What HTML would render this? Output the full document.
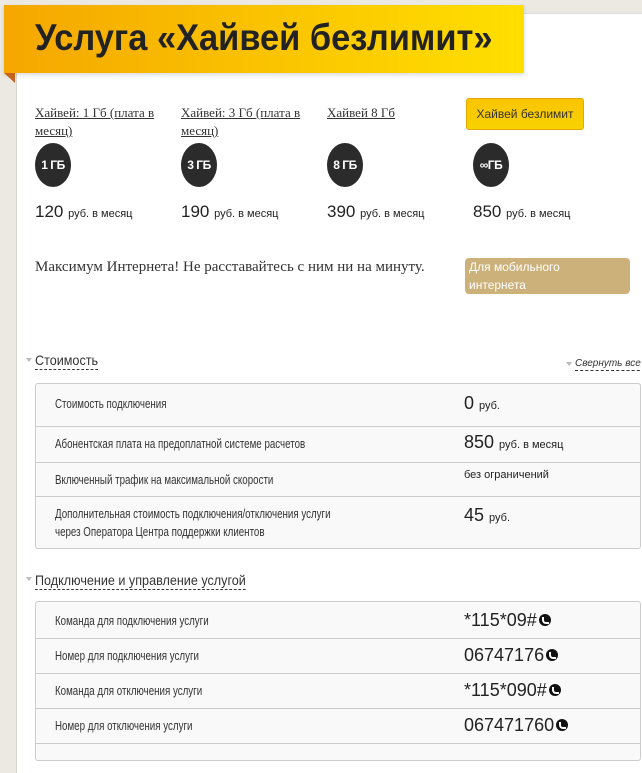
<!DOCTYPE html>
<html><head><meta charset="utf-8"><style>
*{margin:0;padding:0;box-sizing:border-box}
body{width:642px;height:747px;overflow:hidden;background:#ece9e3;font-family:"Liberation Sans",sans-serif;color:#222;position:relative}
.panel{position:absolute;left:16px;top:13px;width:640px;height:760px;background:#fff;border-left:1px solid #d9d6cf;border-top:1px solid #ddd}
.banner{position:absolute;left:4px;top:5px;width:520px;height:68px;background:linear-gradient(90deg,#f5a700,#ffdf00);box-shadow:0 2px 4px rgba(0,0,0,.15)}
.banner h1{position:absolute;left:31px;top:12px;white-space:nowrap;font-family:"Liberation Sans",sans-serif;font-size:37px;font-weight:bold;color:#222;transform:scaleX(.93);transform-origin:left}
.fold{position:absolute;left:4px;top:73px;width:0;height:0;border-top:10px solid #c4641a;border-left:11px solid transparent}
.a{position:absolute;font-family:"Liberation Serif",serif;font-size:13px;color:#333;text-decoration:underline;line-height:18px}
.c{position:absolute;width:36px;height:44px;border-radius:50%;background:#2b2b2b;color:#fff;font-size:12px;font-weight:bold;text-align:center;line-height:44px;top:143px;letter-spacing:-.5px}
.p{position:absolute;top:202px;font-size:17px;color:#222}
.p small{font-size:11px}
.btn{position:absolute;left:466px;top:98px;width:118px;height:32px;background:linear-gradient(#fbc400,#f7d200);border:1px solid #e4a800;border-radius:3px;font-size:12px;text-align:center;line-height:30px;color:#333}
.tag{position:absolute;left:465px;top:258px;width:165px;height:36px;background:#ccb27a;border-radius:4px;color:#fff;font-size:12px;line-height:18px;padding-left:4px}
.h{position:absolute;font-size:14px;color:#333;border-bottom:1px dashed #333;line-height:18px;transform:scaleX(.9);transform-origin:left;white-space:nowrap}
.tri{position:absolute;width:0;height:0;border-left:3px solid transparent;border-right:3px solid transparent;border-top:4px solid #bbb}
.tbl{position:absolute;left:35px;width:606px;background:#f9f9f9;border:1px solid #ccc;border-radius:3px}
.r{position:relative;border-bottom:1px solid #ccc;font-size:13px;color:#333}
.r:last-child{border-bottom:none}
.r .l{position:absolute;left:19px;line-height:18px;transform:scaleX(.75);transform-origin:left;white-space:nowrap}
.r .v{position:absolute;left:428px;font-size:18px;color:#222;white-space:nowrap}
.r .v small{font-size:11px}
.ph{display:inline-block;width:12px;height:12px;border-radius:50%;background:#111;vertical-align:0px;margin-left:2px;position:relative}
.ph:after{content:"";position:absolute;left:3px;top:3px;width:5px;height:5px;border-left:2px solid #fff;border-bottom:2px solid #fff;border-radius:0 0 0 4px}
</style></head><body>
<div class="panel"></div>
<div class="banner"><h1>Услуга «Хайвей безлимит»</h1></div>
<div class="fold"></div>
<div class="a" style="left:35px;top:104px;width:135px">Хайвей: 1 Гб (плата в месяц)</div>
<div class="a" style="left:181px;top:104px;width:135px">Хайвей: 3 Гб (плата в месяц)</div>
<div class="a" style="left:327px;top:104px">Хайвей 8 Гб</div>
<div class="btn">Хайвей безлимит</div>
<div class="c" style="left:35px">1 ГБ</div>
<div class="c" style="left:181px">3 ГБ</div>
<div class="c" style="left:327px">8 ГБ</div>
<div class="c" style="left:473px">∞ГБ</div>
<div class="p" style="left:35px">120 <small>руб. в месяц</small></div>
<div class="p" style="left:181px">190 <small>руб. в месяц</small></div>
<div class="p" style="left:327px">390 <small>руб. в месяц</small></div>
<div class="p" style="left:473px">850 <small>руб. в месяц</small></div>
<div style="position:absolute;left:35px;top:259px;font-family:'Liberation Serif',serif;font-size:15px;color:#333">Максимум Интернета! Не расставайтесь с ним ни на минуту.</div>
<div class="tag">Для мобильного<br>интернета</div>
<div class="tri" style="left:26px;top:358px"></div>
<div class="h" style="left:35px;top:351px">Стоимость</div>
<div class="tri" style="left:566px;top:362px"></div>
<div style="position:absolute;left:575px;top:358px;font-size:10px;font-style:italic;color:#333;border-bottom:1px dashed #333;width:70px;line-height:12px">Свернуть все</div>
<div class="tbl" style="top:383px;height:166px">
<div class="r" style="height:43px"><span class="l" style="top:11px">Стоимость подключения</span><span class="v" style="top:9px">0 <small>руб.</small></span></div>
<div class="r" style="height:36px"><span class="l" style="top:8px">Абонентская плата на предоплатной системе расчетов</span><span class="v" style="top:5px">850 <small>руб. в месяц</small></span></div>
<div class="r" style="height:34px"><span class="l" style="top:8px">Включенный трафик на максимальной скорости</span><span class="v" style="top:6px;font-size:11px">без ограничений</span></div>
<div class="r" style="height:51px"><span class="l" style="top:8px">Дополнительная стоимость подключения/отключения услуги<br>через Оператора Центра поддержки клиентов</span><span class="v" style="top:8px">45 <small>руб.</small></span></div>
</div>
<div class="tri" style="left:26px;top:577px"></div>
<div class="h" style="left:35px;top:571px">Подключение и управление услугой</div>
<div class="tbl" style="top:601px;height:160px">
<div class="r" style="height:37px"><span class="l" style="top:10px">Команда для подключения услуги</span><span class="v" style="top:8px">*115*09#<i class="ph"></i></span></div>
<div class="r" style="height:35px"><span class="l" style="top:8px">Номер для подключения услуги</span><span class="v" style="top:6px">06747176<i class="ph"></i></span></div>
<div class="r" style="height:35px"><span class="l" style="top:8px">Команда для отключения услуги</span><span class="v" style="top:6px">*115*090#<i class="ph"></i></span></div>
<div class="r" style="height:35px"><span class="l" style="top:8px">Номер для отключения услуги</span><span class="v" style="top:6px">067471760<i class="ph"></i></span></div>
<div class="r" style="height:20px"></div>
</div>
</body></html>
